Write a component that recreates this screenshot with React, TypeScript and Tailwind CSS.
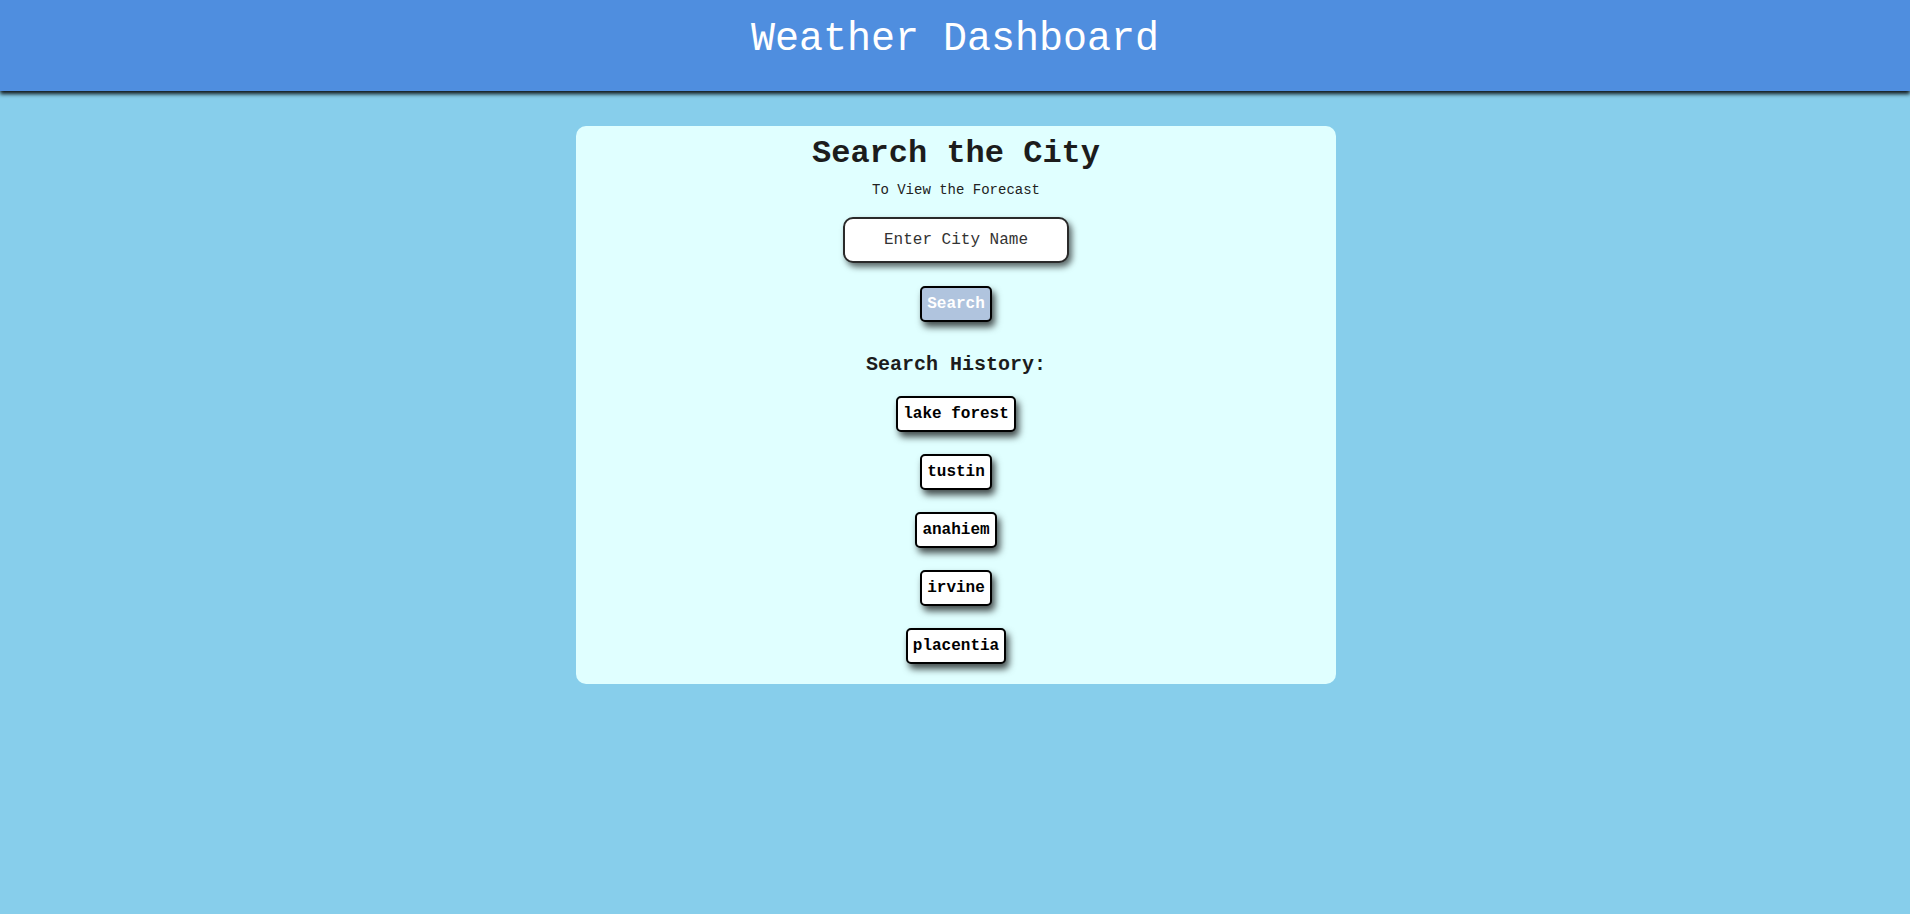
import React from "react";

const history = ["lake forest", "tustin", "anahiem", "irvine", "placentia"];

export default function App() {
  return (
    <div className="min-h-screen bg-[#87CEEB] font-['Liberation_Mono','Courier_New',monospace]">
      <header className="h-[91px] bg-[#4F8EDF] shadow-[0_3px_4px_rgba(0,0,0,0.9)] pt-[17px]">
        <h1 className="text-center text-white text-[40px] leading-[45px] font-normal">Weather Dashboard</h1>
      </header>
      <main className="pt-[35px] pb-10 pl-[2px]">
        <section className="mx-auto w-[760px] bg-[#E0FFFF] rounded-[10px] pt-[10px] pb-[20px] flex flex-col items-center">
          <h2 className="text-[32px] leading-[36px] font-bold text-[#1c1c1c]">Search the City</h2>
          <p className="mt-[10px] text-[14px] leading-[16px] text-[#222]">To View the Forecast</p>
          <input
            type="text"
            placeholder="Enter City Name"
            className="mt-[19px] w-[226px] h-[46px] bg-white border-2 border-[#2a2a2a] rounded-[10px] text-center text-[16px] text-[#222] placeholder:text-[#333] shadow-[3px_4px_6px_rgba(0,0,0,0.6)] outline-none"
          />
          <button className="mt-[23px] h-[36px] px-[5px] bg-[#B0C4DE] border-2 border-black rounded-[5px] text-white text-[16px] leading-[18px] font-bold shadow-[3px_5px_7px_rgba(0,0,0,0.7)]">
            Search
          </button>
          <h3 className="mt-[31px] text-[20px] leading-[23px] font-bold text-[#1c1c1c]">Search History:</h3>
          <div className="mt-[20px] flex flex-col items-center gap-[22px]">
            {history.map((c) => (
              <button
                key={c}
                className="h-[36px] px-[5px] bg-white border-2 border-black rounded-[5px] text-black text-[16px] leading-[18px] font-bold shadow-[3px_5px_7px_rgba(0,0,0,0.7)]"
              >
                {c}
              </button>
            ))}
          </div>
        </section>
      </main>
    </div>
  );
}
